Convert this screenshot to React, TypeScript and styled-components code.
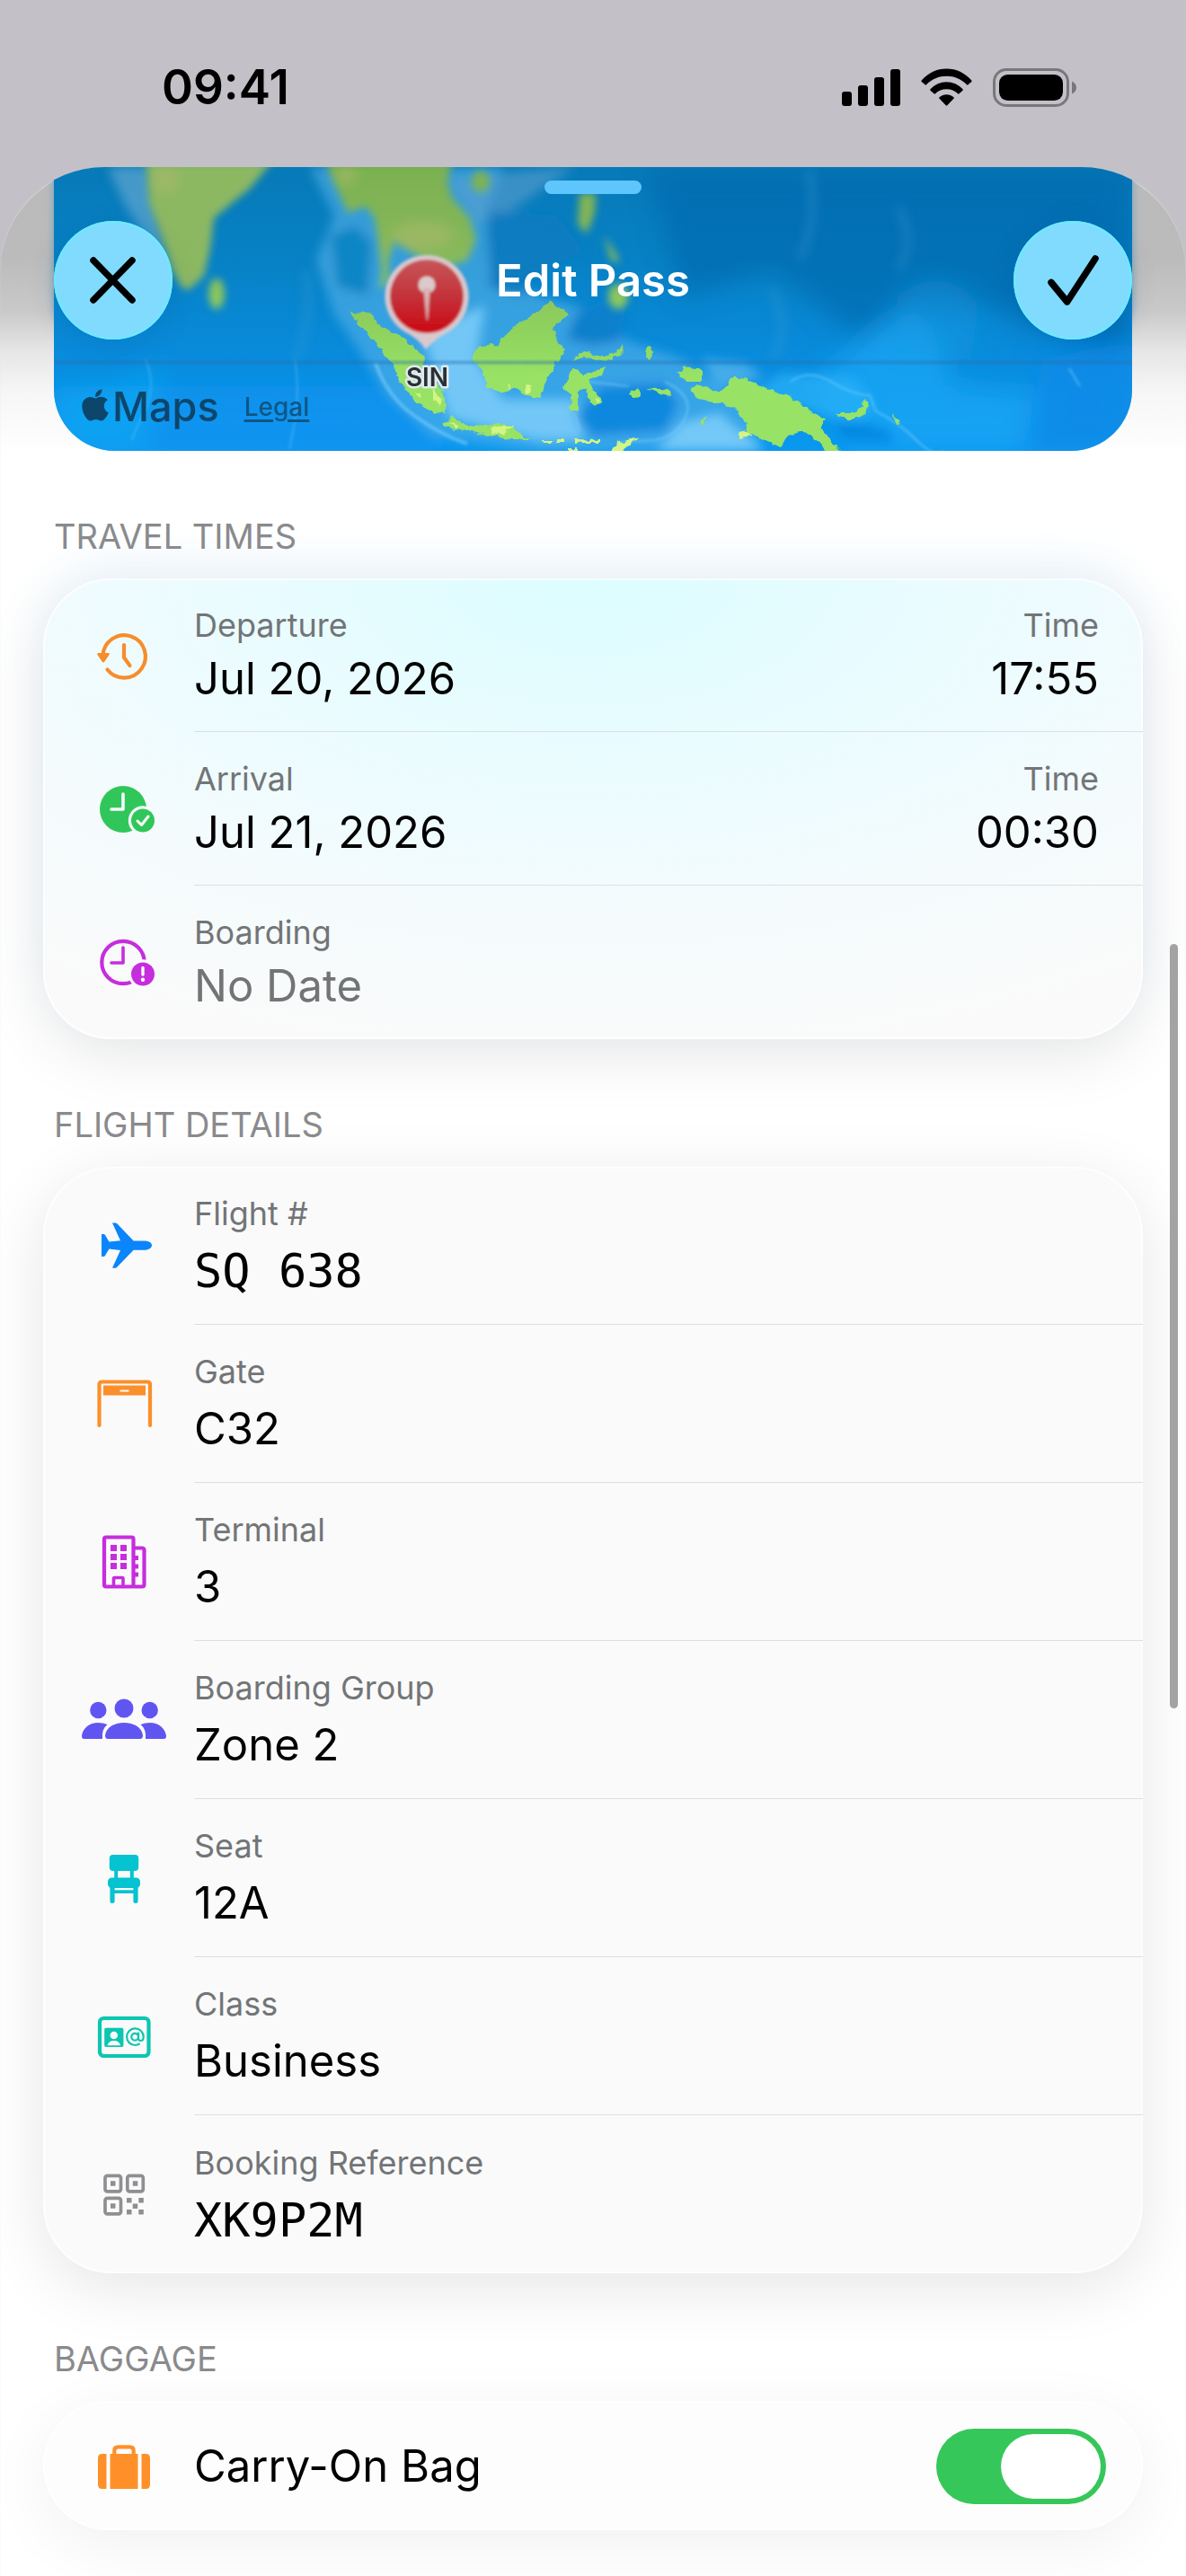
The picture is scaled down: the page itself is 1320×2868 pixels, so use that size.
import type { ReactNode } from 'react';
import styled, { createGlobalStyle } from 'styled-components';
import { FaApple } from 'react-icons/fa';

const GlobalStyle = createGlobalStyle`
    * {
        box-sizing: border-box;
    }

    body {
        margin: 0;
        background: #c3c1c7;
        color: #000;
        font-family: Inter, "Liberation Sans", sans-serif;
    }

    button, input {
        font: inherit;
        color: inherit;
    }
`

const Page = styled.div`
    position: relative;
    display: flex;
    flex-direction: column;
    min-height: 100vh;
`

const StatusBar = styled.header`
    display: flex;
    align-items: center;
    justify-content: space-between;
    height: 186px;
    padding: 8px 122px 0 180px;
    font-size: 53px;
    font-weight: 600;
`

const StatusIcons = styled.div`
    display: flex;
    align-items: center;
    gap: 23px;
`

const Sheet = styled.main`
    position: relative;
    flex: 1;
    padding-bottom: 50px;
    overflow: hidden;
    border-radius: 116px 116px 0 0;
    background: linear-gradient(#bababa 0, #bbb 100px, #c9c9c9 160px, #e6e6e6 205px, #f6f6f6 250px, #fff 320px);
    box-shadow: inset 0 1px 1px #dcdcde;
`

const MapCard = styled.section`
    position: relative;
    height: 316px;
    margin: 0 60px;
    overflow: hidden;
    border-radius: 0 0 68px 68px;
    box-shadow: 0 -100px 8px #6a9fbd;
`

const MapDrawing = styled.svg`
    display: block;
    width: 100%;
    height: 100%;
`

const MapFooter = styled.div`
    position: absolute;
    left: 31px;
    bottom: 22px;
    display: flex;
    align-items: center;
    color: #0c466b;
`

const MapBrand = styled.span`
    display: flex;
    align-items: center;
    gap: 4px;
    font-size: 45px;
    font-weight: 500;
    line-height: 54px;

    svg {
        width: 30px;
        height: 40px;
        margin-bottom: 4px;
    }
`

const LegalLink = styled.a`
    margin-left: 28px;
    color: #0f5684;
    font-size: 28px;
    font-weight: 500;
    text-underline-offset: 4px;
    text-decoration-thickness: 3px;
`

const Grabber = styled.div`
    position: absolute;
    top: 15px;
    left: 50%;
    width: 108px;
    height: 15px;
    border-radius: 8px;
    background: #5fc5fd;
    transform: translateX(-50%);
`

const SheetHeader = styled.div`
    position: absolute;
    top: 60px;
    left: 60px;
    right: 60px;
    display: flex;
    align-items: center;
    justify-content: space-between;
`

const Title = styled.h1`
    margin: 0;
    padding-top: 2px;
    color: #fff;
    font-size: 49px;
    font-weight: 600;
    line-height: 60px;
`

const RoundButton = styled.button`
    width: 132px;
    height: 132px;
    padding: 0;
    border: 0;
    border-radius: 50%;
    background: #80dbff;
    box-shadow: inset 0 0 2px 2px #6eeaff, 0 6px 30px rgba(0, 60, 120, 0.15);

    svg {
        display: block;
    }
`

const SectionTitle = styled.h2`
    position: relative;
    z-index: 1;
    margin: 71px 60px 23px;
    color: #8a8a8d;
    font-size: 38px;
    font-weight: 400;
    line-height: 48px;
`

const Card = styled.section<{ $tone?: 'sky' | 'plain' | 'light' }>`
    margin: 0 48px;
    overflow: hidden;
    border-radius: 76px;
    background: ${({ $tone }) =>
        $tone === 'sky'
            ? 'radial-gradient(ellipse 85% 105% at 50% 0, #dcfdff 0, #e9fcff 35%, #f4fbfd 70%, #fafafa 100%)'
            : $tone === 'light' ? '#fdfdfd' : '#fafafa'};
    box-shadow:
        inset 0 0 1px 2px rgba(255, 255, 255, 0.75),
        0 16px 70px rgba(0, 0, 0, ${({ $tone }) => ($tone === 'light' ? 0.06 : 0.1)})
        ${({ $tone }) => ($tone === 'sky' ? ', 0 -20px 50px rgba(190, 230, 255, 0.2)' : '')};
`

const Row = styled.div<{ $height: number }>`
    display: flex;
    gap: 30px;
    height: ${({ $height }) => $height}px;
    padding-left: 42px;

    &:last-child > div {
        border-bottom: 0;
    }
`

const RowIcon = styled.svg`
    flex: none;
    align-self: center;
    width: 96px;
    height: 72px;
`

const RowBody = styled.div`
    display: flex;
    flex: 1;
    align-items: center;
    justify-content: space-between;
    padding: 2px 49px 0 0;
    border-bottom: 1px solid #dcdfe2;
`

const Field = styled.div<{ $gap: number; $end?: boolean; $grow?: boolean }>`
    display: flex;
    flex: ${({ $grow }) => ($grow ? 1 : 'none')};
    flex-direction: column;
    align-items: ${({ $end }) => ($end ? 'flex-end' : 'stretch')};
    gap: ${({ $gap }) => $gap}px;
`

const FieldLabel = styled.label`
    color: #727577;
    font-size: 36px;
    line-height: 42px;
`

const ValueButton = styled.button<{ $muted?: boolean }>`
    padding: 0;
    border: 0;
    background: none;
    color: ${({ $muted }) => ($muted ? '#727476' : '#000')};
    font-size: 49px;
    line-height: 60px;
    text-align: left;
`

const ValueInput = styled.input<{ $mono?: boolean }>`
    width: 100%;
    height: 60px;
    padding: 0;
    border: 0;
    outline: 0;
    background: none;
    font-family: ${({ $mono }) => ($mono ? '"DejaVu Sans Mono", monospace' : 'inherit')};
    font-size: ${({ $mono }) => ($mono ? 52 : 49)}px;
    line-height: 60px;
`

const ToggleBody = styled(RowBody)`
    padding-right: 41px;
`

const ToggleLabel = styled.label`
    font-size: 49px;
    line-height: 60px;
`

const Toggle = styled.input`
    appearance: none;
    display: flex;
    align-items: center;
    justify-content: flex-start;
    width: 189px;
    height: 84px;
    margin: 0;
    padding: 6px;
    border-radius: 42px;
    background: #d8d8dc;

    &::before {
        content: '';
        width: 111px;
        height: 72px;
        border-radius: 36px;
        background: #fff;
    }

    &:checked {
        justify-content: flex-end;
        background: #35c759;
    }
`

const ScrollThumb = styled.div`
    position: absolute;
    top: 1051px;
    right: 9px;
    width: 9px;
    height: 851px;
    border-radius: 5px;
    background: #a3a3a3;
`

const Signal = () => (
    <svg width="65" height="43" viewBox="0 0 65 43">
        <rect x="0" y="26" width="11" height="16" rx="3" />
        <rect x="18" y="19" width="11" height="23" rx="3" />
        <rect x="36" y="10" width="11" height="32" rx="3" />
        <rect x="54" y="1" width="11" height="41" rx="3" />
    </svg>
);

const Wifi = () => (
    <svg width="57" height="43" viewBox="0 0 57 43">
        <path d="M0.700 13.500C8 5 18 0.500 28.500 0.500S49 5 56.300 13.500Q57 14.300 56.300 15L52.500 18.300Q51.700 19 51 18.200C45 12 37 8.700 28.500 8.700S12 12 6 18.200Q5.300 19 4.500 18.300L0.700 15Q0 14.300 0.700 13.500Z" />
        <path d="M10.500 23.300C15.500 18 21.500 15.300 28.500 15.300S41.500 18 46.500 23.300Q47.200 24 46.500 24.700L42.500 28.300Q41.800 29 41 28.300C37.500 25 33.500 23.300 28.500 23.300S19.500 25 16 28.300Q15.200 29 14.500 28.300L10.500 24.700Q9.800 24 10.500 23.300Z" />
        <path d="M20.500 32.300C23 30.200 25.500 29.300 28.500 29.300S34 30.200 36.500 32.300Q37.300 33 36.500 33.800L29.300 41.300Q28.500 42 27.700 41.300L20.500 33.800Q19.700 33 20.500 32.300Z" />
    </svg>
);

const Battery = () => (
    <svg width="93" height="43" viewBox="0 0 93 43">
        <rect x="1.500" y="1.500" width="82" height="40" rx="13.500" fill="none" stroke="#78777b" strokeWidth="3" />
        <rect x="7" y="7" width="71" height="29" rx="9.500" />
        <path d="M88 14.500Q93 17 93 21.500T88 28.500Z" fill="#78777b" />
    </svg>
);

const CloseIcon = () => (
    <svg width="132" height="132" viewBox="0 0 132 132" stroke="#000" strokeWidth="7.500" strokeLinecap="round">
        <path d="M44 44L87 88M87 44L44 88" />
    </svg>
);

const CheckIcon = () => (
    <svg width="132" height="132" viewBox="0 0 132 132" fill="none" stroke="#000" strokeWidth="7.500" strokeLinecap="round" strokeLinejoin="round">
        <path d="M42 68.500L59.700 90L91 42" />
    </svg>
);

const WorldMap = () => (
    <MapDrawing viewBox="60 186 1200 316" preserveAspectRatio="xMidYMid slice">
        <defs>
            <linearGradient id="sea" x1="0" y1="0" x2="0" y2="1">
                <stop offset="0" stopColor="#077ab8" />
                <stop offset="0.350" stopColor="#0782c6" />
                <stop offset="0.650" stopColor="#098bdb" />
                <stop offset="1" stopColor="#0a98f0" />
            </linearGradient>
            <linearGradient id="land" gradientUnits="userSpaceOnUse" x1="0" y1="186" x2="0" y2="420">
                <stop offset="0" stopColor="#7cb150" />
                <stop offset="0.450" stopColor="#88b95c" />
                <stop offset="0.800" stopColor="#8fd45e" />
                <stop offset="1" stopColor="#98e266" />
            </linearGradient>
            <linearGradient id="pin" x1="0" y1="0" x2="0" y2="1">
                <stop offset="0" stopColor="#c75658" />
                <stop offset="0.500" stopColor="#c3323a" />
                <stop offset="1" stopColor="#cc0712" />
            </linearGradient>
            <filter id="blur16" x="-50%" y="-50%" width="200%" height="200%"><feGaussianBlur stdDeviation="14" /></filter>
            <filter id="blur7" x="-50%" y="-50%" width="200%" height="200%"><feGaussianBlur stdDeviation="6" /></filter>
            <filter id="blur4" x="-50%" y="-50%" width="200%" height="200%"><feGaussianBlur stdDeviation="4" /></filter>
            <filter id="blur1" x="-50%" y="-50%" width="200%" height="200%"><feGaussianBlur stdDeviation="1.500" /></filter>
            <filter id="coast" x="-5%" y="-5%" width="110%" height="110%" colorInterpolationFilters="sRGB">
                <feTurbulence type="fractalNoise" baseFrequency="0.120" numOctaves="2" seed="4" result="noise" />
                <feDisplacementMap in="SourceGraphic" in2="noise" scale="8" xChannelSelector="R" yChannelSelector="G" />
            </filter>
        </defs>

        <rect x="60" y="186" width="1200" height="316" fill="url(#sea)" />

        {/* deep and shallow water */}
        <g filter="url(#blur16)">
            <path d="M720 186H1260V400L1100 340L960 380L860 300L760 330Z" fill="#0669ae" opacity="0.650" />
            <path d="M60 430H420L520 502H60Z" fill="#0a93f2" opacity="0.700" />
            <path d="M980 360Q1020 330 1040 370L1060 430L1180 440L1150 502H960L900 430Z" fill="#1ea8f6" opacity="0.700" />
            <path d="M1160 400L1260 380V502H1140Z" fill="#0b8be8" opacity="0.900" />
            <path d="M60 430Q120 440 180 410L160 502H60Z" fill="#08a6f2" opacity="0.800" />
            <path d="M1000 330Q1050 290 1090 340L1080 400H990Z" fill="#0f9be6" opacity="0.500" />
        </g>
        <g filter="url(#blur7)">
            <path d="M360 186H345L372 240L352 290L372 350L400 390L430 440L480 486L600 502H850L830 450L760 400L700 380L640 340L600 330L545 300L540 240L560 186Z" fill="#57b2ea" opacity="0.600" />
            <path d="M120 186H165L190 310L172 280L140 230Z" fill="#5fa6d0" opacity="0.700" />
            <path d="M500 200L580 190L640 186L560 240L530 250Z" fill="#5a9fce" opacity="0.600" />
            <path d="M470 370L540 340L530 400L560 445H640L650 490H600L500 465Z" fill="#76c9f8" opacity="0.950" />
            <path d="M730 502L760 470L800 460L850 502Z" fill="#7accf8" opacity="0.900" />
            <path d="M780 400L830 405L850 420L800 432Z" fill="#5fb9ef" opacity="0.700" />
            <path d="M640 350L700 320L690 380L660 385L630 378Z" fill="#0b80cc" />
            <path d="M545 235L620 240L650 280L600 300L580 330L545 320Z" fill="#0a7cc0" />
            <path d="M367 262L395 250L415 270L410 330L375 320Z" fill="#0a86c6" />
            <path d="M668 430L740 425L756 450L740 480L660 485L640 465Z" fill="#0988de" />
            <path d="M835 440L870 415L950 420L975 450L955 475L910 460Z" fill="#2ab2f8" opacity="0.700" />
            <path d="M925 470L955 468L990 480L995 494L940 490Z" fill="#0784de" opacity="0.800" />
        </g>
        <g fill="none" filter="url(#blur1)" stroke="#8bd6ff" strokeWidth="2" opacity="0.500">
            <path d="M418 404Q430 440 460 462T520 494" strokeWidth="4" />
            <path d="M740 425Q772 440 764 462T730 490L690 492" />
            <path d="M880 425Q900 410 925 425T968 440L975 458Q1000 470 1020 490T1050 502" />
            <path d="M640 460L645 480M655 425L700 430M1190 410L1202 430" />
            <path d="M162 400Q175 430 160 460T148 490M328 400Q336 440 322 500" opacity="0.600" />
        </g>
        <g fill="none" filter="url(#blur7)" stroke="#3f9fd6" strokeWidth="8" opacity="0.350">
            <path d="M900 190Q912 240 890 290M1000 230Q1020 270 1000 300M340 300Q350 350 330 400M860 320Q880 370 860 400" />
        </g>

        {/* land seen through the header haze */}
        <g fill="url(#land)" filter="url(#blur4)">
            <path d="M162 180L166 227L177 257L185 280L191 300L202 320L210 323L227 307L234 277L238 243L257 227L278 210L303 180Z" fill="#8db862" />
            <ellipse cx="241" cy="327" rx="9" ry="17" />
            <path d="M362 180L378 217L387 237L407 230L417 243L422 277L425 303L422 322L433 313L432 290L440 267L453 277L473 290L497 297L520 290L530 267L523 243L503 220L498 203L503 180Z" />
            <ellipse cx="535" cy="202" rx="10" ry="12" />
            <path d="M645 215L663 215L662 237L653 260L643 250Z" />
            <path d="M672 262L684 280L690 292L680 290Z" />
            <ellipse cx="688" cy="330" rx="11" ry="14" />
        </g>
        <g filter="url(#blur7)" fill="#a9b86a" opacity="0.600">
            <ellipse cx="470" cy="262" rx="34" ry="16" />
            <ellipse cx="385" cy="196" rx="12" ry="10" />
            <ellipse cx="185" cy="200" rx="14" ry="14" />
        </g>

        {/* sharper islands further south */}
        <g fill="url(#land)" filter="url(#coast)">
            <path d="M390 348L412 349L423 362L450 377L472 398L470 410L493 435L497 458L483 460L463 447L447 429L440 411L427 394L420 381L403 366Z" />
            <path d="M613 335L632 350L615 366L628 393L612 414L601 443L587 441L573 431L560 438L542 431L538 413L527 402L528 388L553 383L573 363L597 348Z" />
            <path d="M493 472L503 465L527 475L553 471L571 475L581 485L594 489L567 489L540 484L507 478Z" />
            <path d="M637 410L649 418L674 408L671 416L654 423L670 447L661 453L650 433L643 433L643 457L635 457L637 440L627 433L632 420Z" />
            <path d="M637 402L650 391L673 397L683 393L693 384L691 396L673 402L650 397Z" />
            <path d="M720 432L747 434L748 441L734 438Z" />
            <ellipse cx="707" cy="438" rx="6" ry="5" />
            <path d="M753 415L763 408L782 412L780 425L763 425Z" />
            <path d="M769 433L782 428L799 438L818 418L828 422L854 433L875 439L900 455L919 467L912 475L938 506H923L904 485L889 480L875 488L870 497L849 490L832 480L828 467L816 453L795 447L773 443Z" />
            <path d="M929 460L950 460L959 453L960 446L967 447L963 458L955 466L938 466Z" />
            <path d="M992 460L1002 470L998 472Z" />
            <ellipse cx="722" cy="393" rx="4" ry="7" />
            <path d="M781 468L787 462L785 472L782 474Z" />
        </g>
        <g fill="#d3f583" filter="url(#coast)">
            <path d="M462 436L470 438L468 444ZM482 432L492 446L488 452L481 444Z" />
            <path d="M500 470L512 474L506 478ZM545 475L572 475L562 483L550 484Z" />
            <path d="M564 426L568 428L567 436ZM584 428L592 430L588 440Z" />
            <path d="M620 489L628 489V492H620ZM640 489L668 490V493H640ZM605 491h10v3h-10zM631 499h12v4h-12z" />
            <path d="M711 487L692 503H676L690 492ZM822 482L832 480L838 486L822 488ZM662 446L668 445L664 450Z" />
        </g>

        <rect x="60" y="402" width="1200" height="3" fill="#2a6fae" opacity="0.550" filter="url(#blur1)" />

        <g filter="url(#blur1)">
            <path d="M475 284A46 46 0 0 1 500 369Q484 377 474 389Q466 377 450 369A46 46 0 0 1 475 284Z" fill="#d9c9cd" />
            <circle cx="475" cy="330" r="41" fill="url(#pin)" />
            <circle cx="475" cy="317" r="9.500" fill="#dccaca" />
            <path d="M472 322H478L475.500 356Z" fill="#dcb9ba" stroke="#d5a4a6" strokeWidth="1.500" />
        </g>
        <text
            x="475.500" y="430" textAnchor="middle" fontSize="28" fontWeight="600" fill="#2b3032"
            stroke="#dfeaf0" strokeWidth="5" strokeLinejoin="round" paintOrder="stroke"
        >
            SIN
        </text>
    </MapDrawing>
);

// Row icons are drawn around the centre of a 96x72 box.
const Icon = ({ color, children }: { color: string; children: ReactNode }) => (
    <RowIcon viewBox="-48 -36 96 72" fill={color} color={color} aria-hidden="true">
        {children}
    </RowIcon>
);

const line = {
    fill: 'none',
    stroke: 'currentColor',
    strokeWidth: 4.2,
    strokeLinecap: 'round',
    strokeLinejoin: 'round',
} as const;

const DepartureIcon = () => (
    <Icon color="#f68d2b">
        <path {...line} d="M-23.500 0A23.700 23.700 0 1 1 -18.500 15.500" />
        <path d="M-28.500 -3H-17.500Q-15.500 -3 -16.500 -1L-21.500 6.500Q-23 8.500 -24.500 6.500L-29.500 -1Q-30.500 -3 -28.500 -3Z" />
        <path {...line} d="M0 -12V2L6.500 11" />
    </Icon>
);

const ArrivalIcon = () => (
    <Icon color="#31c65a">
        <mask id="arrivalCut">
            <rect x="-48" y="-36" width="96" height="72" fill="#fff" />
            <circle cx="21" cy="12.500" r="16.200" fill="#000" />
            <path d="M-1 -17V0H-14" fill="none" stroke="#000" strokeWidth="3.600" strokeLinecap="round" strokeLinejoin="round" />
        </mask>
        <circle cx="-1" cy="0" r="26" mask="url(#arrivalCut)" />
        <circle cx="21" cy="12.500" r="13" />
        <path {...line} stroke="#fff" strokeWidth="3" d="M15 13L19.500 17.500L27 8" />
    </Icon>
);

const BoardingIcon = () => (
    <Icon color="#c62ddd">
        <mask id="boardingCut">
            <rect x="-48" y="-36" width="96" height="72" fill="#fff" />
            <circle cx="21" cy="12.500" r="16.200" fill="#000" />
        </mask>
        <circle {...line} cx="-1" cy="-0.500" r="23.700" mask="url(#boardingCut)" />
        <path {...line} strokeWidth="3.600" d="M-1 -17V0H-14" />
        <circle cx="21" cy="12.500" r="13" />
        <path {...line} stroke="#fff" strokeWidth="3.400" d="M21 5.500V13" />
        <circle cx="21" cy="18.800" r="2.200" fill="#fff" />
    </Icon>
);

const PlaneIcon = () => (
    <Icon color="#0a85fb">
        <path d="M10.600 -5.500H24Q31 -4.500 31 -0.500T24 4.700H10.600L-7.500 23.500Q-8.500 24.700 -10 24.700H-13L-4 4.900L-16.600 3.500L-21 11Q-21.500 12 -23 12H-25V-13H-23Q-21.500 -13 -21 -12L-16.600 -4.500L-4 -5.700L-13 -25.500H-10Q-8.500 -25.500 -7.500 -24.500Z" />
    </Icon>
);

const GateIcon = () => (
    <Icon color="#fb8f2b">
        <path {...line} d="M-27.500 24V-21.500Q-27.500 -24.500 -24.500 -24.500H26Q29 -24.500 29 -21.500V24" />
        <path d="M-23 -20.500H24V-9.500H-23ZM-4.500 -15.500V-13.500H5.500V-15.500Z" fillRule="evenodd" />
    </Icon>
);

const TerminalIcon = () => (
    <Icon color="#c62ddd">
        <rect {...line} x="-22" y="-27.500" width="32.500" height="55" rx="2" />
        <path {...line} d="M11 -15.500H20Q22.500 -15.500 22.500 -13V25Q22.500 27.500 20 27.500H11" />
        <path d="M-15 -19h7v7h-7zM-4 -19h7v7h-7zM-15 -9h7v7h-7zM-4 -9h7v7h-7zM-15 1h7v7h-7zM-4 1h7v7h-7z" />
        <path d="M11 -7h5v5h-5zM11 2.500h5v5h-5zM11 11.500h5v5h-5z" />
        <path {...line} strokeWidth="3.600" d="M-11.500 26V18.500Q-11.500 17.500 -10.500 17.500H-2Q-1 17.500 -1 18.500V26" />
    </Icon>
);

const GroupIcon = () => (
    <Icon color="#6155f2">
        <circle cx="0" cy="-13" r="10.500" />
        <circle cx="-28.700" cy="-11" r="9.200" />
        <circle cx="28.700" cy="-11" r="9.200" />
        <path d="M-21 17C-20 8.500 -11 3 0 3S20 8.500 21 17Q21 21 18 21H-18Q-21 21 -21 17Z" />
        <path d="M-47 17.500C-46 9 -38 3 -29 3Q-23 3 -18.500 5Q-25 10 -24 21H-44.500Q-47 21 -47 17.500Z" />
        <path d="M47 17.500C46 9 38 3 29 3Q23 3 18.500 5Q25 10 24 21H44.500Q47 21 47 17.500Z" />
    </Icon>
);

const SeatIcon = () => (
    <Icon color="#05c3d0">
        <rect x="-16.200" y="-26" width="32.400" height="18" rx="4" />
        <path d="M-10.800 -10h4v12h-4zM6.800 -10h4v12h-4z" />
        <rect x="-18" y="-0.500" width="36" height="11.500" rx="4.500" />
        <rect x="-15.600" y="8" width="5.200" height="20" rx="2.200" />
        <rect x="10.400" y="8" width="5.200" height="20" rx="2.200" />
        <path d="M-12 13.300h24v3.700h-24z" />
    </Icon>
);

const ClassIcon = () => (
    <Icon color="#0bc6b0">
        <rect {...line} x="-27" y="-20" width="54.500" height="42" rx="4.500" />
        <path
            fillRule="evenodd"
            d="M-20 -9.300H-2.400Q-0.600 -9.300 -0.600 -7.500V10.200Q-0.600 12 -2.400 12H-20Q-21.800 12 -21.800 10.200V-7.500Q-21.800 -9.300 -20 -9.300ZM-11.200 -5.300A4.200 4.200 0 1 0 -11.200 3.200A4.200 4.200 0 1 0 -11.200 -5.300ZM-18.500 10.200H-3.800Q-5.500 5 -11.200 5T-18.500 10.200Z"
        />
        <path {...line} strokeWidth="2.200" d="M17 8.700Q15 10 12.500 10A9.300 9.300 0 1 1 21.700 0.500Q21.700 5 18.700 5T16 1.500V-3.300" />
        <circle {...line} strokeWidth="2.200" cx="12.200" cy="0.700" r="3.900" />
    </Icon>
);

const ReferenceIcon = () => (
    <Icon color="#8f8f92">
        <rect {...line} strokeWidth="3.700" x="-21" y="-20.700" width="17.500" height="17.500" rx="2.500" />
        <rect {...line} strokeWidth="3.700" x="3.800" y="-20.700" width="17.500" height="17.500" rx="2.500" />
        <rect {...line} strokeWidth="3.700" x="-21" y="4.300" width="17.500" height="17.500" rx="2.500" />
        <path d="M-15 -14.700h5.500v5.500h-5.500zM9.800 -14.700h5.500v5.500h-5.500zM-15 10.300h5.500v5.500h-5.500z" />
        <path d="M3 4h5.500v5.500h-5.500zM16.300 4h5.500v5.500h-5.500zM9.700 10.500h5.500v5.500h-5.500zM3 17h5.500v5.500h-5.500zM16.300 17h5.500v5.500h-5.500z" />
    </Icon>
);

const BagIcon = () => (
    <Icon color="#ff9029">
        <path d="M-19.500 -13V26H-24.500Q-29 26 -29 21V-8Q-29 -13 -24.500 -13ZM-15.500 -13H15.500V26H-15.500ZM19.500 -13V26H24.500Q29 26 29 21V-8Q29 -13 24.500 -13Z" />
        <path {...line} d="M-10.700 -12V-16.500Q-10.700 -20.700 -6.500 -20.700H6.500Q10.700 -20.700 10.700 -16.500V-12" />
    </Icon>
);

const times = [
    { id: 'departure', label: 'Departure', date: 'Jul 20, 2026', time: '17:55', icon: <DepartureIcon /> },
    { id: 'arrival', label: 'Arrival', date: 'Jul 21, 2026', time: '00:30', icon: <ArrivalIcon /> },
    { id: 'boarding', label: 'Boarding', date: 'No Date', time: null, icon: <BoardingIcon /> },
];

const details = [
    { id: 'flight', label: 'Flight #', value: 'SQ 638', mono: true, icon: <PlaneIcon /> },
    { id: 'gate', label: 'Gate', value: 'C32', icon: <GateIcon /> },
    { id: 'terminal', label: 'Terminal', value: '3', icon: <TerminalIcon /> },
    { id: 'group', label: 'Boarding Group', value: 'Zone 2', icon: <GroupIcon /> },
    { id: 'seat', label: 'Seat', value: '12A', icon: <SeatIcon /> },
    { id: 'class', label: 'Class', value: 'Business', icon: <ClassIcon /> },
    { id: 'reference', label: 'Booking Reference', value: 'XK9P2M', mono: true, icon: <ReferenceIcon /> },
];

const App = () => {
    return (
        <Page>
            <GlobalStyle />
            <StatusBar>
                <span>09:41</span>
                <StatusIcons>
                    <Signal />
                    <Wifi />
                    <Battery />
                </StatusIcons>
            </StatusBar>
            <Sheet>
                <MapCard>
                    <WorldMap />
                    <MapFooter>
                        <MapBrand><FaApple />Maps</MapBrand>
                        <LegalLink href="#legal">Legal</LegalLink>
                    </MapFooter>
                </MapCard>
                <Grabber />
                <SheetHeader>
                    <RoundButton aria-label="Close"><CloseIcon /></RoundButton>
                    <Title>Edit Pass</Title>
                    <RoundButton aria-label="Save"><CheckIcon /></RoundButton>
                </SheetHeader>

                <SectionTitle>TRAVEL TIMES</SectionTitle>
                <Card $tone="sky">
                    {times.map(({ id, label, date, time, icon }) => (
                        <Row key={id} $height={171}>
                            {icon}
                            <RowBody>
                                <Field $gap={9}>
                                    <FieldLabel htmlFor={id}>{label}</FieldLabel>
                                    <ValueButton id={id} $muted={!time}>{date}</ValueButton>
                                </Field>
                                {time && (
                                    <Field $gap={9} $end>
                                        <FieldLabel htmlFor={`${id}-time`}>Time</FieldLabel>
                                        <ValueButton id={`${id}-time`}>{time}</ValueButton>
                                    </Field>
                                )}
                            </RowBody>
                        </Row>
                    ))}
                </Card>

                <SectionTitle>FLIGHT DETAILS</SectionTitle>
                <Card>
                    {details.map(({ id, label, value, mono, icon }) => (
                        <Row key={id} $height={176}>
                            {icon}
                            <RowBody>
                                <Field $gap={13} $grow>
                                    <FieldLabel htmlFor={id}>{label}</FieldLabel>
                                    <ValueInput id={id} $mono={mono} defaultValue={value} />
                                </Field>
                            </RowBody>
                        </Row>
                    ))}
                </Card>

                <SectionTitle>BAGGAGE</SectionTitle>
                <Card $tone="light">
                    <Row $height={144}>
                        <BagIcon />
                        <ToggleBody>
                            <ToggleLabel htmlFor="carry-on">Carry-On Bag</ToggleLabel>
                            <Toggle id="carry-on" type="checkbox" defaultChecked />
                        </ToggleBody>
                    </Row>
                </Card>
            </Sheet>
            <ScrollThumb />
        </Page>
    );
};

export default App;
